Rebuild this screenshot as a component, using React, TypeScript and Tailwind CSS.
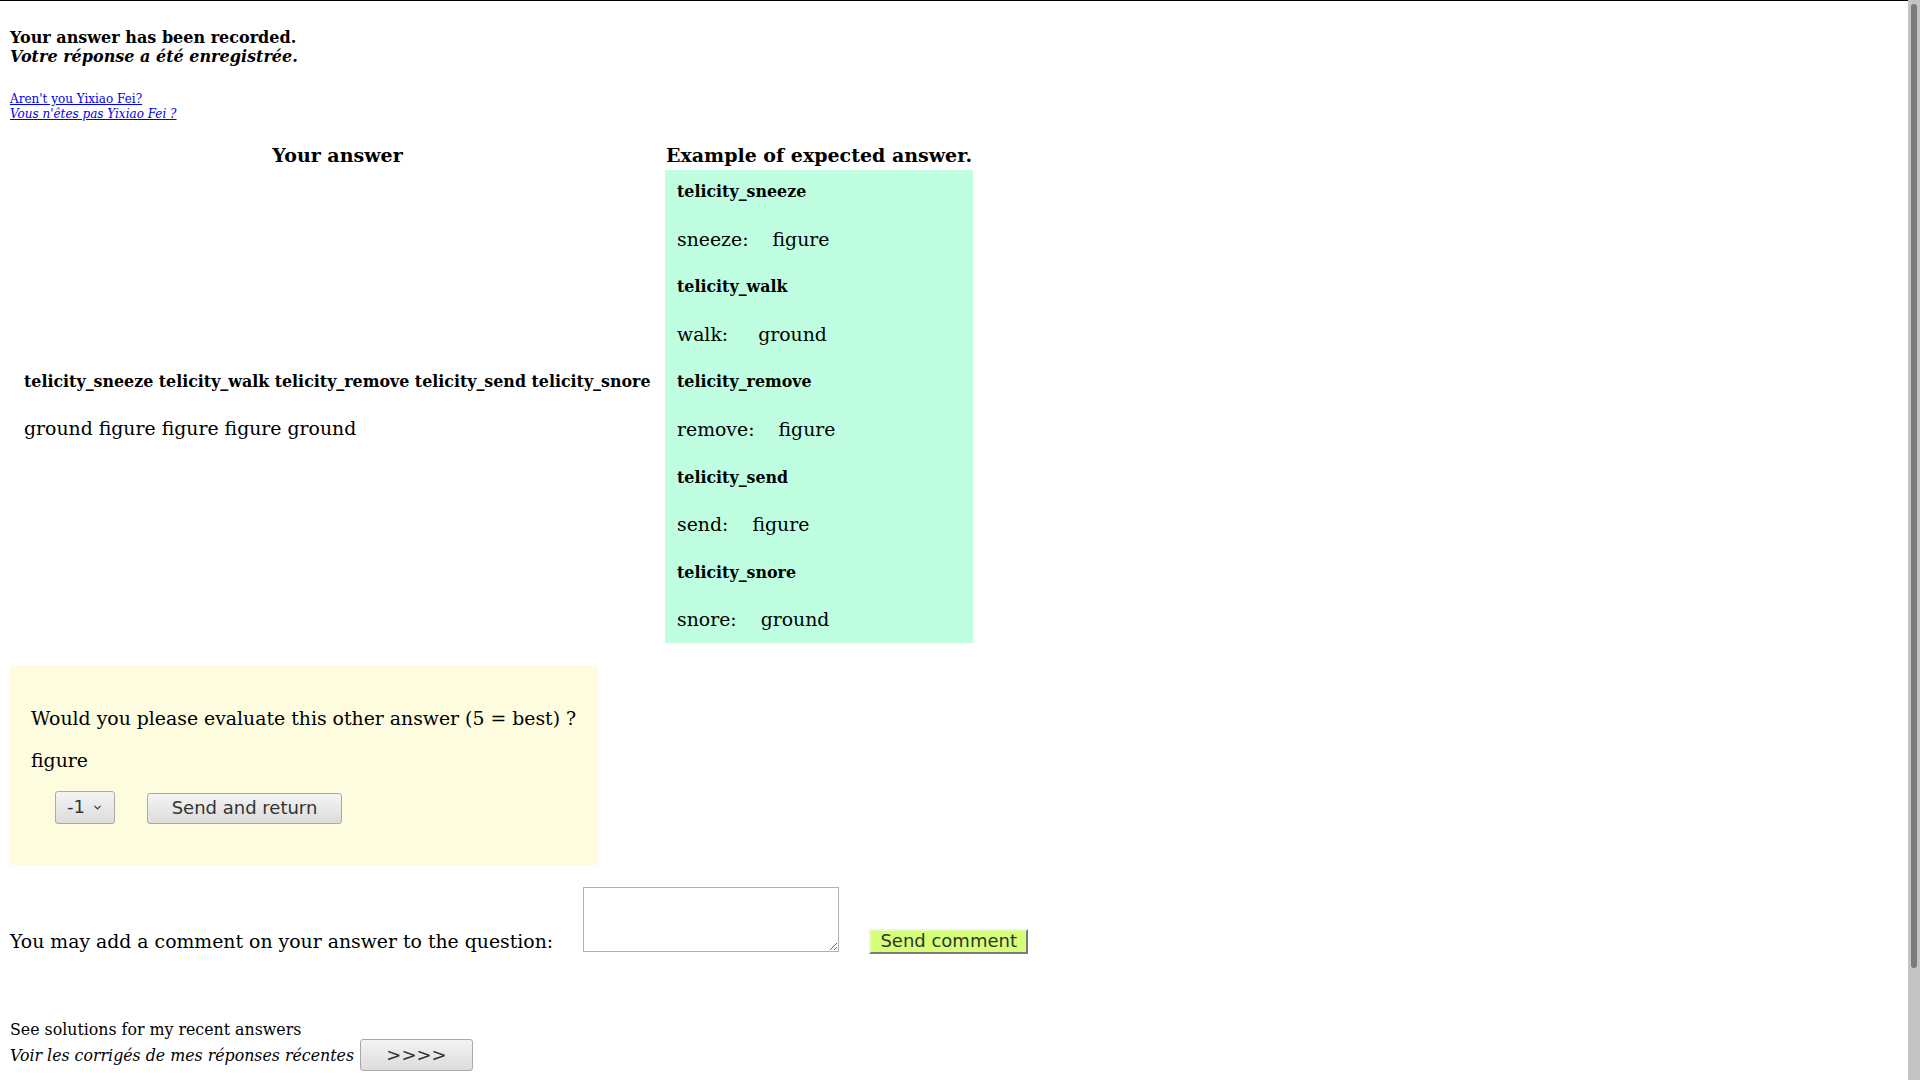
import { ChevronDown } from "lucide-react"

type Expected = {
  title: string
  verb: string
  role: string
  gap: string
}

const expected: Expected[] = [
  { title: "telicity_sneeze", verb: "sneeze:", role: "figure", gap: "ml-[24px]" },
  { title: "telicity_walk", verb: "walk:", role: "ground", gap: "ml-[30px]" },
  { title: "telicity_remove", verb: "remove:", role: "figure", gap: "ml-[24px]" },
  { title: "telicity_send", verb: "send:", role: "figure", gap: "ml-[24px]" },
  { title: "telicity_snore", verb: "snore:", role: "ground", gap: "ml-[24px]" },
]

// grey "native looking" button used in the evaluation box and the footer
const greyButton =
  "rounded-[3px] border border-[#a9a9a9] bg-gradient-to-b from-[#f4f4f4] to-[#dcdcdc] font-['DejaVu_Sans',sans-serif] text-[18px] leading-none text-[#333]"

export default function App() {
  return (
    <div className="flex h-screen overflow-hidden bg-white">
      <div className="flex-1 border-t border-black px-[10px] font-['DejaVu_Serif',serif] text-black">
        {/* Confirmation */}
        <div className="pt-[27px] text-[16px] font-bold leading-[19px]">
          <div>Your answer has been recorded.</div>
          <div className="italic">Votre réponse a été enregistrée.</div>
        </div>

        <div className="mt-[26px] text-[12px] leading-[14.5px]">
          <a href="#" className="block text-[#0000ee] underline">
            Aren't you Yixiao Fei?
          </a>
          <a href="#" className="block italic text-[#0000ee] underline">
            Vous n'êtes pas Yixiao Fei ?
          </a>
        </div>

        {/* Answer vs expected */}
        <div className="mt-[23px] flex text-[19px] font-bold leading-[22px]">
          <div className="w-[655px] text-center">Your answer</div>
          <div className="w-[308px] text-center">Example of expected answer.</div>
        </div>
        <div className="mt-[4px] flex">
          <div className="flex w-[655px] flex-col justify-center pb-[1.5px] pl-[14px]">
            <div className="flex h-[47.6px] items-center text-[15.85px] font-bold">
              telicity_sneeze telicity_walk telicity_remove telicity_send telicity_snore
            </div>
            <div className="flex h-[47.6px] items-center text-[18.85px]">
              ground figure figure figure ground
            </div>
          </div>
          <div className="h-[473px] w-[308px] overflow-hidden bg-[#bffee1] px-[12px]">
            {expected.map((item) => (
              <div key={item.title}>
                <div className="h-[47.6px] pt-[11px] text-[15.85px] font-bold leading-[22px]">{item.title}</div>
                <div className="flex h-[47.6px] pt-[11px] text-[18.85px] leading-[22px]">
                  <span>{item.verb}</span>
                  <span className={item.gap}>{item.role}</span>
                </div>
              </div>
            ))}
          </div>
        </div>

        {/* Evaluate another answer */}
        <div className="mt-[22px] h-[200px] w-[588px] bg-[#fdfcdf] pl-[21px] pt-[43px] text-[18.85px] leading-[21px]">
          <div>Would you please evaluate this other answer (5 = best) ?</div>
          <div className="mt-[20.5px]">figure</div>
          <div className="mt-[20px] flex items-start pl-[24px]">
            <button className={`${greyButton} flex h-[33px] w-[60px] items-center justify-center gap-[7px]`}>
              <span>-1</span>
              <ChevronDown className="h-[11px] w-[11px]" strokeWidth={2.5} />
            </button>
            <button className={`${greyButton} ml-[32px] mt-[2px] h-[31px] w-[195px]`}>
              Send and return
            </button>
          </div>
        </div>

        {/* Comment */}
        <div className="mt-[21.5px] flex items-start">
          <div className="mt-[44px] text-[18.85px] leading-[21px]">
            You may add a comment on your answer to the question:
          </div>
          <textarea className="ml-[30px] h-[65px] w-[256px] resize border border-[#b0b0b0] bg-white" />
          <button className="ml-[30px] mt-[42px] h-[25px] w-[159px] border-2 border-t-[#e6ffb8] border-l-[#e6ffb8] border-b-[#7a7a7a] border-r-[#7a7a7a] bg-[#d4ff77] font-['DejaVu_Sans',sans-serif] text-[18px] leading-none text-[#333]">
            Send comment
          </button>
        </div>

        {/* Recent answers */}
        <div className="mt-[66.5px] text-[15.8px] leading-[19px]">
          <div>See solutions for my recent answers</div>
          <div className="flex items-center">
            <span className="italic">Voir les corrigés de mes réponses récentes</span>
            <button className={`${greyButton} ml-[6px] h-[32px] w-[113px]`}>&gt;&gt;&gt;&gt;</button>
          </div>
        </div>
      </div>

      {/* page scrollbar */}
      <div className="w-[12px] shrink-0 bg-[#c3c3c3] px-[3px] pt-[4px]">
        <div className="h-[964px] rounded-full bg-[#7b7b7b]" />
      </div>
    </div>
  )
}
